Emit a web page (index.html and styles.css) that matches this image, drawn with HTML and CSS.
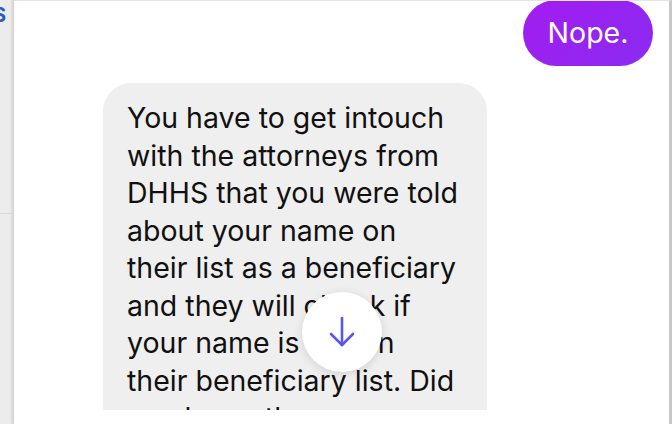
FILE: index.html
```html
<!DOCTYPE html>
<html lang="en">

<head>
    <meta charset="UTF-8">
    <meta name="viewport" content="width=device-width, initial-scale=1.0">
    <title>Chat</title>
    <link rel="stylesheet" href="styles.css">
</head>

<body>
    <!-- side list peeking out on the left -->
    <div class="side">
        <span class="side-brand">S</span>
        <div class="side-line"></div>
    </div>

    <!-- conversation panel -->
    <div class="panel">
        <div class="thread">
            <div class="msg out">Nope.</div>
            <div class="msg in">You have to get intouch<br>with the attorneys from<br>DHHS that you were told<br>about your name on<br>their list as a beneficiary<br>and they will check if<br>your name is still on<br>their beneficiary list. Did<br>you know the</div>
        </div>
        <div class="composer"></div>

        <!-- jump to latest -->
        <button class="jump" aria-label="Scroll to bottom">
            <svg width="28" height="32" viewBox="0 0 28 32" fill="none" stroke="#5a55f2" stroke-width="2.6" stroke-linecap="round" stroke-linejoin="round">
                <path d="M14 2 V29" />
                <path d="M3 18 L14 29 L25 18" />
            </svg>
        </button>
    </div>
</body>

</html>
```

FILE: styles.css
```css
* {
    margin: 0;
    padding: 0;
    box-sizing: border-box;
}

html,
body {
    height: 100%;
}

body {
    display: flex;
    width: 672px;
    height: 424px;
    overflow: hidden;
    background: #fff;
    font-family: Inter, "Noto Sans", "Liberation Sans", sans-serif;
}

.side {
    width: 14px;
    flex: none;
    background: linear-gradient(90deg, #ececec 0, #ececec 9px, #dcdcdc 14px);
    overflow: hidden;
}

.side-brand {
    display: block;
    margin: 5px 0 0 -7px;
    font-size: 20px;
    font-weight: 700;
    color: #2a5cc4;
    line-height: 20px;
}

.side-line {
    margin-top: 188px;
    height: 1px;
    background: #d9d9d9;
}

.panel {
    flex: 1;
    position: relative;
    display: flex;
    flex-direction: column;
    border-top: 1px solid #e4e4e4;
    border-right: 3px solid #c8c8c8;
    box-shadow: -1px 0 3px rgba(0, 0, 0, .08);
}

.thread {
    height: 409px;
    overflow: hidden;
    display: flex;
    flex-direction: column;
}

.composer {
    flex: 1;
    background: #fff;
}

.msg {
    font-size: 28.5px;
    white-space: nowrap;
}

.out {
    align-self: flex-end;
    margin: -1px 16px 0 0;
    width: 130px;
    height: 66px;
    border-radius: 33px;
    background: linear-gradient(135deg, #a31cf1, #8a2bf0);
    color: #fff;
    text-align: center;
    line-height: 66px;
}

.in {
    align-self: flex-start;
    margin: 17px 0 0 89px;
    width: 384px;
    flex: none;
    padding: 16px 0 0 24px;
    border-radius: 28px;
    background: #efefef;
    color: #111;
    line-height: 37.5px;
    overflow: hidden;
}

.jump {
    position: absolute;
    left: 288px;
    top: 291px;
    width: 80px;
    height: 80px;
    border: none;
    border-radius: 50%;
    background: #fff;
    box-shadow: 0 2px 10px rgba(0, 0, 0, .12);
    display: flex;
    align-items: center;
    justify-content: center;
}
```
